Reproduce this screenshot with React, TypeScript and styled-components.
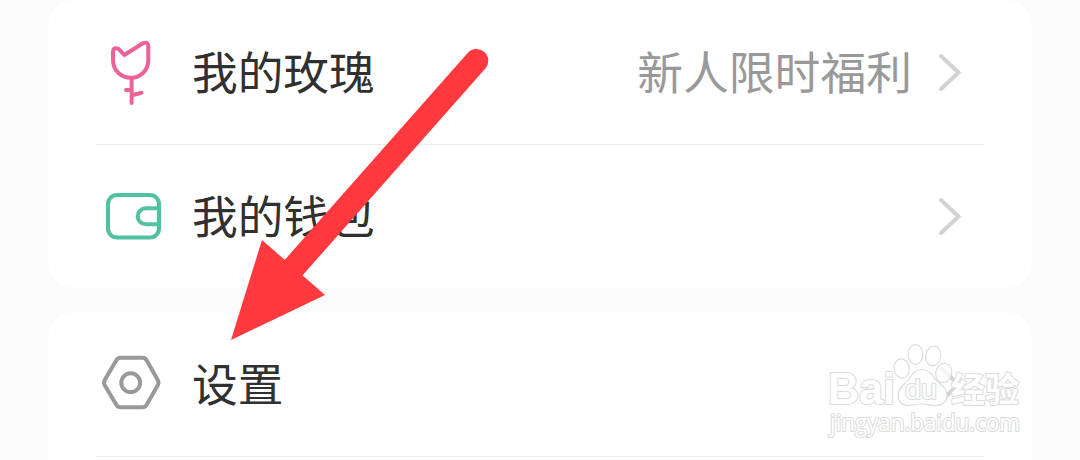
import { memo, ReactNode } from "react";

import styled, { createGlobalStyle } from "styled-components";

const COLOR_PAGE = "#fafafa";
const COLOR_CARD = "#ffffff";
const COLOR_LINE = "#e6eceb";
const COLOR_FONT = "#303030";
const COLOR_HINT = "#999999";
const COLOR_CHEVRON = "#d2d2d2";
const COLOR_ARROW = "#ff393d";
const COLOR_MARK = "#dcdcdc";

const GlobalStyle = createGlobalStyle`
  * {
    box-sizing: border-box;
  }

  body {
    background-color: ${COLOR_PAGE};
    font-family: "Noto Sans CJK SC", "Noto Sans", sans-serif;
    overflow: hidden;
    margin: 0;
  }
`;

const StyledPage = styled.div`
  background-color: ${COLOR_PAGE};
  flex-flow: column;
  position: relative;
  overflow: hidden;
  padding: 0 48px;
  display: flex;
  height: 460px;
  width: 1080px;
  gap: 24px;
`;

const StyledCard = styled.div<{ $height: number }>`
  flex: 0 0 auto;
  background-color: ${COLOR_CARD};
  height: ${(p) => p.$height}px;
  border-radius: 24px;
  flex-flow: column;
  display: flex;
`;

const StyledRow = styled.div`
  flex: 0 0 144px;
  align-items: center;
  padding: 0 70px 0 51px;
  display: flex;
`;

const StyledDivider = styled.div`
  flex: 0 0 1px;
  background-color: ${COLOR_LINE};
  margin: 0 48px -1px;
`;

const StyledIcon = styled.svg`
  flex: 0 0 auto;
  height: 72px;
  width: 64px;
  fill: none;
  stroke-width: 4;
  stroke-linecap: round;
  stroke-linejoin: round;
`;

const StyledLabel = styled.div`
  flex: 1 1 auto;
  color: ${COLOR_FONT};
  padding: 0 0 5px 29px;
  line-height: 60px;
  font-size: 45.7px;
`;

const StyledHint = styled.div`
  flex: 0 0 auto;
  color: ${COLOR_HINT};
  padding-bottom: 5px;
  margin-right: 26px;
  line-height: 60px;
  font-size: 45.8px;
`;

const StyledChevron = styled.svg`
  flex: 0 0 auto;
  height: 40px;
  width: 24px;
  fill: none;
  stroke: ${COLOR_CHEVRON};
  stroke-width: 4;
  stroke-linecap: round;
`;

const StyledArrow = styled.svg`
  position: absolute;
  left: 220px;
  top: 40px;
`;

const StyledMark = styled.svg`
  position: absolute;
  left: 810px;
  top: 335px;
  fill: ${COLOR_CARD};
  stroke: ${COLOR_MARK};
  stroke-width: 1.2;
  stroke-linejoin: round;
`;

const StyledMarkText = styled.text<{ $font: string; $size: number; $bold?: boolean }>`
  font-family: ${(p) => p.$font}, sans-serif;
  font-weight: ${(p) => (p.$bold ? 700 : 400)};
  font-size: ${(p) => p.$size}px;
  paint-order: stroke;
  stroke-width: 2.2;
`;

const RoseIcon = () => (
  <StyledIcon viewBox="0 0 64 72" stroke="#ec6298">
    <path d="M14 24V16Q14 12.3 17.3 12.3Q19.3 12.3 21 14.3L25.3 19L43.5 7.5Q49.3 4.7 49.3 11V24C49.3 35 41 41.7 32 41.7C22.5 41.7 14 35 14 24Z" />
    <path d="M32.6 42V67M27 54H32M33 59.2L42.5 56.8" />
  </StyledIcon>
);

const WalletIcon = () => (
  <StyledIcon viewBox="0 -1 64 72" stroke="#50c2a2">
    <rect x="9" y="14" width="51" height="42.5" rx="9" />
    <path d="M59 27.3H46.7A8 8 0 0 0 46.7 43.3H59" />
  </StyledIcon>
);

const SettingsIcon = () => (
  <StyledIcon viewBox="0 0 64 72" stroke="#999999">
    <path d="M21.5 9.8H43.5Q46 9.8 47.5 12L58.5 31.5Q60.3 34.6 58.5 37.7L47.5 57Q46 59.3 43.5 59.3H21.5Q19 59.3 17.5 57L6 37.7Q4.2 34.6 6 31.5L17.5 12Q19 9.8 21.5 9.8Z" />
    <circle cx="31.7" cy="34.7" r="9.4" />
  </StyledIcon>
);

const Row = memo(({ icon, label, hint }: { icon: ReactNode; label: string; hint?: string }) => (
  <StyledRow>
    {icon}
    <StyledLabel>{label}</StyledLabel>
    {hint && <StyledHint>{hint}</StyledHint>}
    <StyledChevron viewBox="0 0 24 40">
      <path d="M3 4L20.5 20.5L3 37" />
    </StyledChevron>
  </StyledRow>
));

const Arrow = () => (
  <StyledArrow width="280" height="310" viewBox="220 40 280 310">
    <path d="M476.5 60.8L288 274" stroke={COLOR_ARROW} strokeWidth="23.6" strokeLinecap="round" />
    <path d="M231 340L262 240L325 295Z" fill={COLOR_ARROW} />
  </StyledArrow>
);

const Watermark = () => (
  <StyledMark width="240" height="120" viewBox="810 335 240 120">
    <StyledMarkText x="828" y="403.5" $font="Liberation Sans" $size={44} $bold textLength="67" lengthAdjust="spacingAndGlyphs">
      Bai
    </StyledMarkText>
    <ellipse cx="901.7" cy="368.5" rx="7.7" ry="9.7" transform="rotate(-8 901.7 368.5)" />
    <ellipse cx="915.4" cy="354.5" rx="7.3" ry="10" />
    <ellipse cx="933.2" cy="356" rx="7.5" ry="10" transform="rotate(10 933.2 356)" />
    <path d="M922 369.5C929 369.5 932 375 936 380C941 385 947 388 947 395C947 402 942 406 935 405.5C930 405 927 404 922 404C917 404 914 405.5 909 405.5C902 405.5 898 401 898 395C898 388 904 385 908 380C912 375 915 369.5 922 369.5Z" />
    <ellipse cx="943.7" cy="373" rx="8" ry="9.7" fillOpacity="0.75" transform="rotate(12 943.7 373)" />
    <StyledMarkText x="905" y="398.8" $font="Liberation Sans" $size={27} textLength="32" lengthAdjust="spacingAndGlyphs">
      du
    </StyledMarkText>
    <StyledMarkText x="951" y="401.5" $font="Noto Sans CJK SC" $size={34} $bold textLength="68" lengthAdjust="spacingAndGlyphs">
      经验
    </StyledMarkText>
    <StyledMarkText x="830" y="430.5" $font="Open Sans" $size={23} textLength="190" lengthAdjust="spacingAndGlyphs">
      jingyan.baidu.com
    </StyledMarkText>
  </StyledMark>
);

const App = () => (
  <>
    <GlobalStyle />
    <StyledPage>
      <StyledCard $height={288}>
        <Row icon={<RoseIcon />} label="我的玫瑰" hint="新人限时福利" />
        <StyledDivider />
        <Row icon={<WalletIcon />} label="我的钱包" />
      </StyledCard>
      <StyledCard $height={288}>
        <Row icon={<SettingsIcon />} label="设置" />
        <StyledDivider />
      </StyledCard>
      <Arrow />
      <Watermark />
    </StyledPage>
  </>
);

export default App;
